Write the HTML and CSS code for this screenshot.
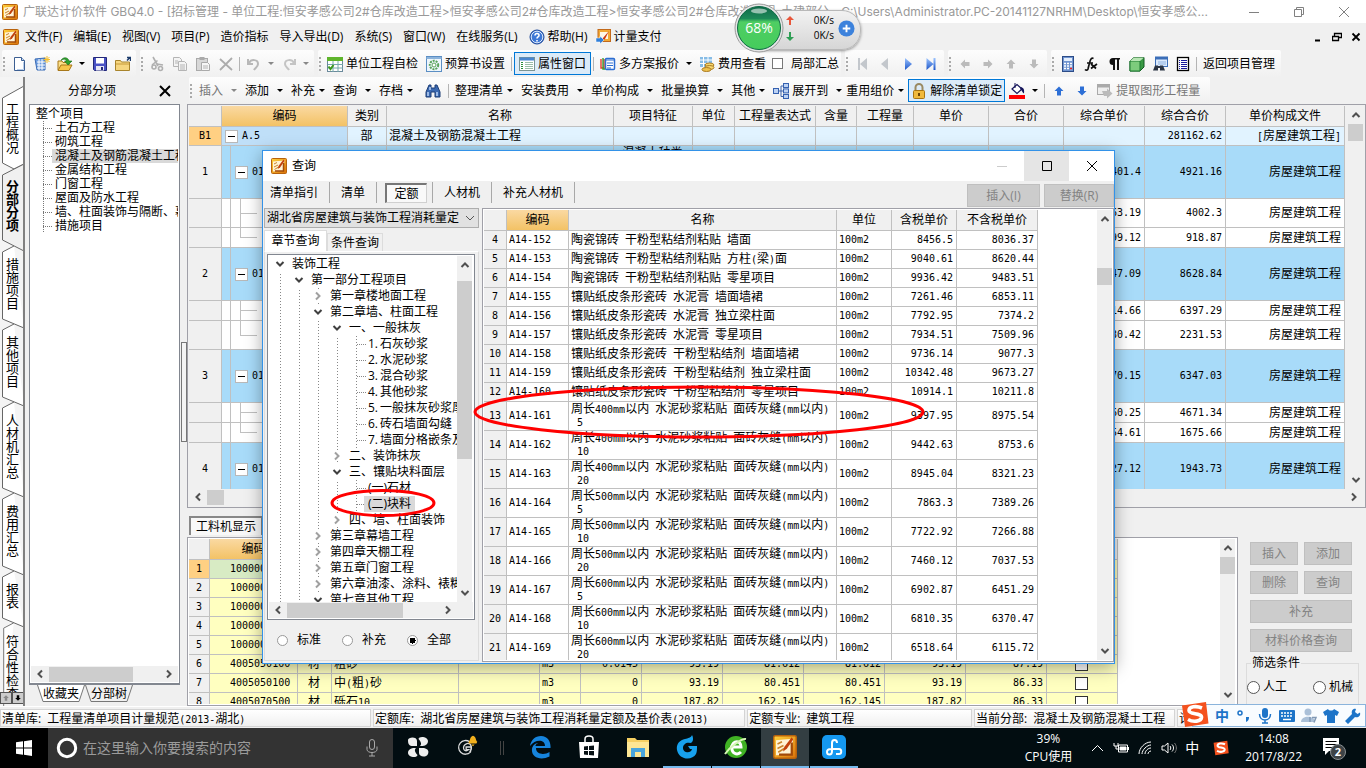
FILE: index.html
```html
<!DOCTYPE html>
<html lang="zh-CN">
<head>
<meta charset="utf-8">
<title>广联达计价软件 GBQ4.0</title>
<link rel="stylesheet" href="styles.css">
</head>
<body>
<svg class="defs" aria-hidden="true">
  <defs>
    <linearGradient id="gold" x1="0" y1="0" x2="1" y2="1"><stop offset="0" stop-color="#ffd23c"/><stop offset="1" stop-color="#d9720a"/></linearGradient>
    <linearGradient id="sky" x1="0" y1="0" x2="0" y2="1"><stop offset="0" stop-color="#9cc4ff"/><stop offset="1" stop-color="#1c55c8"/></linearGradient>
    <linearGradient id="gball" x1="0" y1="0" x2="0" y2="1"><stop offset="0" stop-color="#11694a"/><stop offset=".28" stop-color="#1d8a58"/><stop offset=".36" stop-color="#4fce63"/><stop offset="1" stop-color="#45cc5c"/></linearGradient>
  </defs>
  <symbol id="logo" viewBox="0 0 16 16"><rect x=".5" y=".5" width="15" height="15" rx="1" fill="url(#gold)" stroke="#b8620c"/><path d="M2 3.500 7 3l6.500-.5-1.500 10.500-10 .5z" fill="#fff3d4"/><path d="M3 6l3-1.500M3 9l4-2M3.500 11.500l4-2.500" stroke="#c9842c" fill="none"/><path d="M12.500 1.500 7.500 8l-.8 3 2.500-1.800L13.500 3z" fill="#c2410c"/><path d="M12.500 5v8H4" stroke="#a24a08" stroke-width="1.500" fill="none"/></symbol>
  <symbol id="new" viewBox="0 0 16 16"><path d="M3.500 1.500h7l3 3v10h-10z" fill="#fff" stroke="#3c5f92"/><path d="M10.500 1.500v3h3" fill="#c8dcf8" stroke="#3c5f92"/><path d="M12.500 6v7.500H6" stroke="#b7cdea" fill="none"/></symbol>
  <symbol id="grid" viewBox="0 0 16 16"><path d="M1 3l10-1v12H3z" fill="#6f9ee0" stroke="#3b6cb5"/><path d="M3 6h8M3 9h8M3 12h8M5 3v11M8 3v11" stroke="#fff"/><path d="M13 0v7M9.500 3.500h7M10.500 1l5 5M15.500 1l-5 5" stroke="#f3bd2b"/></symbol>
  <symbol id="open" viewBox="0 0 16 16"><path d="M1 14V5h4l1 1.500h6V9" fill="#fce08a" stroke="#a8781a"/><path d="M1 14.500 4 9h11l-3 5.500z" fill="#f6c54a" stroke="#a8781a"/><path d="M4 4.500C6 .5 11 1 12 5h3l-4 4-3.500-4h2C9 3 6.500 2.500 4 4.500z" fill="#2ea32e" stroke="#146a14" stroke-width=".6"/></symbol>
  <symbol id="save" viewBox="0 0 16 16"><path d="M1.500 1.500h13v13h-12l-1-1z" fill="#4a52c4" stroke="#23287a"/><rect x="4" y="2" width="8" height="5.500" fill="#fff"/><rect x="4" y="10" width="8" height="4.500" fill="#e8e8f4"/><rect x="9" y="11" width="2" height="3" fill="#23287a"/></symbol>
  <symbol id="folder" viewBox="0 0 16 16"><path d="M.5 14.500v-10h5l1 1.500h8v8.500z" fill="#f6d680" stroke="#a8842c"/><path d="M1 8h13" stroke="#c69a3a"/><path d="M12 4.500 15 1.500M12 1.500h3.500V5" stroke="#1c3c6c" stroke-width="1.500" fill="none"/></symbol>
  <symbol id="cut" viewBox="0 0 16 16"><g fill="none" stroke="#b0b0b0" stroke-width="1.600"><path d="M4 1l5 9M8.500 4.500 3 9"/><circle cx="5" cy="11" r="2"/><circle cx="11.500" cy="12.500" r="2"/><path d="M8 8l6 1"/></g></symbol>
  <symbol id="copy" viewBox="0 0 16 16"><path d="M1.500 1.500h6l2 2v7h-8z" fill="#f4f4f4" stroke="#b4b4b4"/><path d="M6.500 5.500h6l2 2v7h-8z" fill="#f4f4f4" stroke="#b4b4b4"/><path d="M8 9h5M8 11h5M8 13h5M3 5h3M3 7h3" stroke="#b4b4b4"/></symbol>
  <symbol id="paste" viewBox="0 0 16 16"><rect x="1.500" y="2.500" width="11" height="12" fill="#d8d8d8" stroke="#aaa"/><rect x="4.500" y="1" width="5" height="3" fill="#aaa"/><path d="M6.500 6.500h6l2 2v6h-8z" fill="#f6f6f6" stroke="#aaa"/><path d="M8 10h5M8 12h5" stroke="#b4b4b4"/></symbol>
  <symbol id="del" viewBox="0 0 16 16"><path d="M2 3l12 11M14 2 2 14" stroke="#acacac" stroke-width="1.800"/></symbol>
  <symbol id="undo" viewBox="0 0 16 16"><path d="M2 3v5h5M3 7c2-4 9-4 9 1 0 3-3 4-4 6" fill="none" stroke="#b8b8b8" stroke-width="2"/></symbol>
  <symbol id="redo" viewBox="0 0 16 16"><path d="M14 3v5H9M13 7C11 3 4 3 4 8c0 3 3 4 4 6" fill="none" stroke="#c4c4c4" stroke-width="2"/></symbol>
  <symbol id="tbl" viewBox="0 0 16 16"><rect x=".5" y="1.500" width="15" height="14" fill="#fff" stroke="#6b8a9c"/><rect y="1" width="16" height="4" fill="#5fb52c"/><path d="M1 8.500h15M1 12h15M6 5v11M11 5v11" stroke="#7aa"/><path d="M1.500 10.500l2 2.500 3-4" stroke="#3c9a1c" stroke-width="2" fill="none"/></symbol>
  <symbol id="gear" viewBox="0 0 16 16"><rect x=".5" y=".5" width="15" height="15" fill="#eef6fc" stroke="#5b8ec4"/><path d="M.5 2h15" stroke="#8db4dc" stroke-width="2"/><circle cx="8" cy="9" r="4.200" fill="none" stroke="#5aa45a" stroke-width="2" stroke-dasharray="2 1"/><circle cx="8" cy="9" r="2" fill="#fff" stroke="#5aa45a"/></symbol>
  <symbol id="prop" viewBox="0 0 16 16"><rect x=".5" y="1.500" width="15" height="13" fill="#fff" stroke="#7a9494"/><path d="M1 3h14" stroke="#4a86cf" stroke-width="3"/><path d="M6 6.500h8M6 8.500h8M6 10.500h8M6 12.500h8" stroke="#9abca8"/><path d="M2 6.500h2M2 8.500h2M2 10.500h2M2 12.500h2" stroke="#2b8d3c"/></symbol>
  <symbol id="multi" viewBox="0 0 16 16"><path d="M1 3v9h3V3" fill="#fff" stroke="#e03c2c" stroke-width="1.400"/><path d="M3 2v11h2" fill="none" stroke="#34a034" stroke-width="1.400"/><rect x="5.500" y="2.500" width="9" height="11" rx="1" fill="#fff" stroke="#2c6ed2" stroke-width="1.500"/><path d="M5 4h10M7 7h6M7 9.500h6M7 12h4" stroke="#2c6ed2"/></symbol>
  <symbol id="fee" viewBox="0 0 16 16"><rect x="1" y="1" width="12" height="10" fill="#86bce6"/><path d="M1 4h12M1 7.500h12M4.500 1v10M9 1v10" stroke="#fff"/><ellipse cx="10.500" cy="9" rx="4.500" ry="2" fill="#f6d66e" stroke="#ab7b22"/><ellipse cx="10.500" cy="11.500" rx="4.500" ry="2" fill="#f6d66e" stroke="#ab7b22"/><ellipse cx="7.500" cy="13.500" rx="4.500" ry="2" fill="#eec24e" stroke="#ab7b22"/></symbol>
  <symbol id="first" viewBox="0 0 16 16"><path d="M4 2h2v12H4zM13 2v12L6 8z" fill="#c3c7cc"/></symbol>
  <symbol id="prev" viewBox="0 0 16 16"><path d="M11 2v12L4 8z" fill="#c3c7cc"/></symbol>
  <symbol id="next" viewBox="0 0 16 16"><path d="M5 2v12l7-6z" fill="url(#sky)"/></symbol>
  <symbol id="last" viewBox="0 0 16 16"><path d="M10.500 2h2v12h-2zM3.500 2v12l7-6z" fill="url(#sky)"/></symbol>
  <symbol id="arr" viewBox="0 0 16 16"><path d="M8 3.500 12.500 8H10v4.500H6V8H3.500z"/></symbol>
  <symbol id="calc" viewBox="0 0 16 16"><rect x="2.500" y=".5" width="11" height="15" fill="#6f94d0" stroke="#2c4c88"/><rect x="4" y="2" width="8" height="3" fill="#e4eefc"/><path d="M4 7.500h8M4 10h8M4 12.500h8" stroke="#fff" stroke-width="1.500" stroke-dasharray="2 1"/><path d="M10 12.500h2" stroke="#e22" stroke-width="1.500"/></symbol>
  <symbol id="fx" viewBox="0 0 16 16"><path d="M10.500 2.500C7.500 1 7 5 5 13c-.5 1.500-2 1.500-3 .5M4 7h6M8 8l5 4.500M14 8l-6 4.500" fill="none" stroke="#111" stroke-width="1.700"/></symbol>
  <symbol id="para" viewBox="0 0 16 16"><path d="M14 2H7a3.500 3.500 0 0 0 0 7v5h2V3.500h2V14h2V3.500h1z" fill="#111"/></symbol>
  <symbol id="cube" viewBox="0 0 16 16"><path d="M1 5l4-3.500h10V11l-4 4H1z" fill="#3a9a45" stroke="#125a22"/><path d="M1 5h10v10H1z" fill="#7ccc7c" stroke="#1c7a30"/><path d="M1 5l4-3.500h10L11 5z" fill="#b8e6b4"/></symbol>
  <symbol id="find" viewBox="0 0 16 16"><rect x="3.500" y="1.500" width="12" height="9" fill="#dbeafd" stroke="#3b6eb8"/><path d="M3 2h13" stroke="#3b6eb8" stroke-width="3"/><path d="M6 6h8M6 8h8" stroke="#8fb2e0"/><path d="M1 14.500l2-5h3v5zM8 14.500v-5h3l2 5z" fill="#2a3444"/><path d="M5 11h4" stroke="#2a3444" stroke-width="2"/></symbol>
  <symbol id="lst" viewBox="0 0 16 16"><rect x="2.500" y="1.500" width="11" height="13" fill="#fff" stroke="#000" stroke-width="1.300"/><path d="M4 4.500h1M6 4.500h6M4 6.500h1M6 6.500h6M4 8.500h1M6 8.500h6M4 10.500h1M6 10.500h6M4 12.500h1M6 12.500h6" stroke="#1a1a9a"/></symbol>
  <symbol id="bino" viewBox="0 0 16 16"><path d="M1 14V9l3-7h2v3h4V2h2l3 7v5h-5V9H6v5z" fill="#3a68b0" stroke="#1c3c74"/><path d="M3 9v4M12 9v4M5 4v3" stroke="#bcd4f6" stroke-width="1.500"/></symbol>
  <symbol id="exp" viewBox="0 0 16 16"><path d="M6 8h4M8 8V3h2M8 8v5.500h2" fill="none" stroke="#3a62ac"/><g fill="#bcd2f4" stroke="#3561b0"><rect x=".5" y="5.500" width="5" height="5"/><rect x="10.500" y=".5" width="5" height="4"/><rect x="10.500" y="5.900" width="5" height="4"/><rect x="10.500" y="11.500" width="5" height="4"/></g></symbol>
  <symbol id="lock" viewBox="0 0 16 16"><path d="M4.500 8V4.500a3.500 3.500 0 0 1 7 0V8" fill="none" stroke="#9a8a62" stroke-width="2"/><rect x="2.500" y="7.500" width="11" height="8" rx="1" fill="#f0b93c" stroke="#a87412"/><path d="M8 10v3" stroke="#704600" stroke-width="2"/></symbol>
  <symbol id="fill" viewBox="0 0 16 16"><path d="M3 6l5-4.500L13 6 8 10.500z" fill="#fff" stroke="#15155a" stroke-width="1.200"/><path d="M6 0v5" stroke="#15155a"/><path d="M12 4c3 1 3.500 3 3 6.500C13.500 10 13 7 11 6z" fill="#15155a"/><path d="M0 12h16v4H0z" fill="#f00"/></symbol>
  <symbol id="pick" viewBox="0 0 16 16"><rect x=".5" y="1.500" width="12" height="10" fill="#eee" stroke="#aaa"/><path d="M0 3h13" stroke="#aaa" stroke-width="3"/><path d="M5 8h5V5.500l5.500 5-5.500 5V13H7z" fill="#bbb"/></symbol>
  <symbol id="help" viewBox="0 0 16 16"><circle cx="8" cy="8" r="7" fill="#3e78d6" stroke="#1b4596"/><circle cx="8" cy="8" r="5.800" fill="none" stroke="#dbe8fb"/><path d="M6 6.500C6 3.500 10.500 4 10 6.800 9.500 8 8 8 8 9.500M8 11v1.500" stroke="#fff" stroke-width="1.600" fill="none"/></symbol>
  <symbol id="pay" viewBox="0 0 16 16"><rect x="3" y=".5" width="12.500" height="12" fill="#f2a934" stroke="#c2691a"/><path d="M5 3h8v7H5z" fill="#fff7e4"/><path d="M14 2 8 9l-1 3 3-2z" fill="#cf3a12"/><path d="M1 9h4V7l4 4-4 4v-2H1z" fill="#2f7fda" stroke="#fff" stroke-width=".5"/></symbol>
  <symbol id="cv" viewBox="0 0 10 10"><path d="M1.500 3 5 6.500 8.500 3" fill="none" stroke="currentColor" stroke-width="2"/></symbol>
  <symbol id="sogou" viewBox="0 0 28 26"><path d="M1 4 25 .5 27.500 22 4 25.500z" fill="#f4511e"/><path d="M21 6.500C15 4 8 5 8 9c0 4.500 13 2 12.500 7-.5 4-8 5-13.500 2" fill="none" stroke="#fff" stroke-width="3.600"/></symbol>
</svg>

<header>
  <div class="titlebar">
    <svg class="i"><use href="#logo"/></svg>
    <span class="ttl">广联达计价软件 GBQ4.0 - [招标管理 - 单位工程:恒安孝感公司2#仓库改造工程&gt;恒安孝感公司2#仓库改造工程&gt;恒安孝感公司2#仓库改造工程-土建部分 - C:\Users\Administrator.PC-20141127NRHM\Desktop\恒安孝感公...</span>
    <div class="winctl">
      <button aria-label="最小化"><svg viewBox="0 0 12 12"><path d="M1 6.500h10"/></svg></button>
      <button aria-label="还原"><svg viewBox="0 0 12 12"><path d="M1.500 3.500h7v7h-7zM3.500 3.500v-2h7v7h-2"/></svg></button>
      <button aria-label="关闭"><svg viewBox="0 0 12 12"><path d="M1 1l10 10M11 1 1 11"/></svg></button>
    </div>
  </div>
  <nav class="menubar">
    <svg class="i"><use href="#logo"/></svg>
    <button>文件(F)</button><button>编辑(E)</button><button>视图(V)</button><button>项目(P)</button><button>造价指标</button><button>导入导出(D)</button><button>系统(S)</button><button>窗口(W)</button><button>在线服务(L)</button><button><svg class="i"><use href="#help"/></svg>帮助(H)</button><button class="near"><svg class="i"><use href="#pay"/></svg>计量支付</button>
    <div class="mdi">
      <button aria-label="最小化子窗口"><svg viewBox="0 0 10 10"><path d="M2 8.500h5" stroke-width="2"/></svg></button>
      <button aria-label="还原子窗口"><svg viewBox="0 0 10 10"><path d="M.5 4.500h6v4h-6zM2.500 4V1.500h7v4H7M2 1.500h8M0 4.500h7" stroke-width="1.300"/></svg></button>
      <button aria-label="关闭子窗口"><svg viewBox="0 0 10 10"><path d="M1.500 1.500l7 7M8.500 1.500l-7 7" stroke-width="1.800"/></svg></button>
    </div>
  </nav>
  <div class="bar">
    <div class="grp"><i class="grip"></i>
      <button class="ib" aria-label="新建"><svg class="i"><use href="#new"/></svg></button><button class="ib" aria-label="新建表"><svg class="i"><use href="#grid"/></svg></button><button class="ib" aria-label="打开"><svg class="i"><use href="#open"/></svg></button><i class="car"></i><button class="ib" aria-label="保存"><svg class="i"><use href="#save"/></svg></button><button class="ib" aria-label="文件夹"><svg class="i"><use href="#folder"/></svg></button></div>
    <div class="grp"><i class="grip"></i>
      <button class="ib" aria-label="剪切"><svg class="i"><use href="#cut"/></svg></button><button class="ib" aria-label="复制"><svg class="i"><use href="#copy"/></svg></button><button class="ib" aria-label="粘贴"><svg class="i"><use href="#paste"/></svg></button><button class="ib" aria-label="删除行"><svg class="i"><use href="#del"/></svg></button><i class="sep"></i><button class="ib" aria-label="撤销"><svg class="i"><use href="#undo"/></svg></button><i class="car off"></i><button class="ib" aria-label="重做"><svg class="i"><use href="#redo"/></svg></button><i class="car off"></i></div>
    <div class="grp"><i class="grip"></i>
      <button class="tb"><svg class="i"><use href="#tbl"/></svg>单位工程自检</button><button class="tb"><svg class="i"><use href="#gear"/></svg>预算书设置</button><i class="sep"></i><button class="tb on"><svg class="i"><use href="#prop"/></svg>属性窗口</button><i class="sep"></i><button class="tb"><svg class="i"><use href="#multi"/></svg>多方案报价</button><i class="car"></i><button class="tb"><svg class="i"><use href="#fee"/></svg>费用查看</button><label class="chk"><input type="checkbox">局部汇总</label></div>
    <div class="grp"><i class="grip"></i>
      <button class="ib" aria-label="首条"><svg class="i"><use href="#first"/></svg></button><button class="ib" aria-label="上一条"><svg class="i"><use href="#prev"/></svg></button><button class="ib" aria-label="下一条"><svg class="i"><use href="#next"/></svg></button><button class="ib" aria-label="末条"><svg class="i"><use href="#last"/></svg></button></div>
    <div class="grp"><i class="grip"></i>
      <button class="ib gray" aria-label="左移"><svg class="i l"><use href="#arr"/></svg></button><button class="ib gray" aria-label="右移"><svg class="i r"><use href="#arr"/></svg></button><button class="ib gray" aria-label="上移"><svg class="i"><use href="#arr"/></svg></button><button class="ib gray" aria-label="下移"><svg class="i d"><use href="#arr"/></svg></button></div>
    <div class="grp"><i class="grip"></i>
      <button class="ib" aria-label="计算器"><svg class="i"><use href="#calc"/></svg></button><button class="ib" aria-label="函数"><svg class="i"><use href="#fx"/></svg></button><button class="ib" aria-label="段落"><svg class="i"><use href="#para"/></svg></button><button class="ib" aria-label="图形"><svg class="i"><use href="#cube"/></svg></button><button class="ib" aria-label="查找表"><svg class="i"><use href="#find"/></svg></button><button class="ib" aria-label="列表"><svg class="i"><use href="#lst"/></svg></button><i class="sep"></i><button class="tb">返回项目管理</button></div>
  </div>
</header>

<main>
  <nav class="vtabs">
    <button><svg viewBox="0 0 24 78"><path d="M24 -3 2.500 9V74L14 80 24 75"/></svg>工程概况</button>
    <button class="cur"><svg viewBox="0 0 24 78"><path d="M24 -3 2.500 8V73L24 84"/></svg>分部分项</button>
    <button><svg viewBox="0 0 24 78"><path d="M14 1 2.500 7V74L24 83"/></svg>措施项目</button>
    <button><svg viewBox="0 0 24 78"><path d="M14 1 2.500 7V74L24 83"/></svg>其他项目</button>
    <button><svg viewBox="0 0 24 91"><path d="M14 1 2.500 7V87L24 96"/></svg>人材机汇总</button>
    <button><svg viewBox="0 0 24 78"><path d="M14 1 2.500 7V74L24 83"/></svg>费用汇总</button>
    <button><svg viewBox="0 0 24 52"><path d="M14 1 2.500 7V48L24 57"/></svg>报表</button>
    <button><svg viewBox="0 0 24 104"><path d="M14 1 2.500 7V104"/></svg>符合性检查</button>
    <div class="spin"><button aria-label="上滚" disabled><svg class="i"><use href="#arr"/></svg></button><button aria-label="下滚"><svg class="i d"><use href="#arr"/></svg></button></div>
  </nav>

  <aside class="side">
    <div class="sidehead"><span>分部分项</span><button aria-label="关闭面板"><svg viewBox="0 0 12 12"><path d="M1 1l10 10M11 1 1 11"/></svg></button></div>
    <div class="sidebox">
      <div class="ptree"><div>整个项目</div>
        <ul><li>土石方工程</li><li>砌筑工程</li><li class="sel">混凝土及钢筋混凝土工程</li><li>金属结构工程</li><li>门窗工程</li><li>屋面及防水工程</li><li>墙、柱面装饰与隔断、幕墙</li><li>措施项目</li></ul>
      </div>
      <div class="hs"><svg class="a l"><use href="#cv"/></svg><i class="thumb"></i><svg class="a r"><use href="#cv"/></svg></div>
    </div>
    <div class="sidetabs"><button><svg viewBox="0 0 48 17"><path d="M.5 0 6 16.500H42L47.500 0"/></svg><span>收藏夹</span></button><button class="cur"><svg viewBox="0 0 48 17"><path d="M.5 0 6 16.500H42L47.500 0"/></svg><span>分部树</span></button></div>
  </aside>
  <div class="split"><i></i></div>

  <section class="work">
    <div class="bar bar2">
      <div class="grp"><i class="grip"></i>
        <button class="tx off">插入</button><i class="car wide off"></i><button class="tx">添加</button><i class="car wide"></i><button class="tx">补充</button><i class="car mid"></i><button class="tx">查询</button><i class="car wide"></i><button class="tx">存档</button><i class="car mid"></i><button class="ib" aria-label="查找"><svg class="i"><use href="#bino"/></svg></button><i class="sep"></i><button class="tx">整理清单</button><i class="car mid"></i><button class="tx">安装费用</button><i class="car wide"></i><button class="tx">单价构成</button><i class="car wide"></i><button class="tx">批量换算</button><i class="car wide"></i><button class="tx">其他</button><i class="car"></i><button class="tb"><svg class="i"><use href="#exp"/></svg>展开到</button><i class="car"></i><button class="tx">重用组价</button><i class="car"></i><button class="tb on"><svg class="i"><use href="#lock"/></svg>解除清单锁定</button><button class="ib" aria-label="填充颜色"><svg class="i"><use href="#fill"/></svg></button><i class="car"></i><i class="sep"></i><button class="ib blue" aria-label="清单上移"><svg class="i"><use href="#arr"/></svg></button><button class="ib blue" aria-label="清单下移"><svg class="i d"><use href="#arr"/></svg></button><button class="tb off"><svg class="i"><use href="#pick"/></svg>提取图形工程量</button></div>
    </div>

    <div class="frame top">
      <div class="clip">
        <table class="g main">
          <colgroup><col style="width:33px"><col style="width:126px"><col style="width:39px"><col><col style="width:79px"><col style="width:42px"><col style="width:81px"><col style="width:41px"><col style="width:57px"><col style="width:75px"><col style="width:75px"><col style="width:81px"><col style="width:81px"><col style="width:119px"></colgroup>
          <thead><tr><th></th><th class="hot">编码</th><th>类别</th><th>名称</th><th>项目特征</th><th>单位</th><th>工程量表达式</th><th>含量</th><th>工程量</th><th>单价</th><th>合价</th><th>综合单价</th><th>综合合价</th><th>单价构成文件</th></tr></thead>
          <tbody>
            <tr class="h19 part"><th class="n">B1</th><td class="code n k1"><i class="mb"></i>A.5</td><td class="c">部</td><td>混凝土及钢筋混凝土工程</td><td></td><td></td><td></td><td></td><td></td><td></td><td></td><td></td><td class="num">281162.62</td><td class="rt"><span class="n">[</span>房屋建筑工程<span class="n">]</span></td></tr>
            <tr class="h53 item"><th class="n">1</th><td class="code n k2"><i class="mb"></i>01</td><td></td><td></td><td class="feat">混凝土种类</td><td></td><td></td><td></td><td></td><td></td><td></td><td class="num">401.4</td><td class="num">4921.16</td><td class="rt">房屋建筑工程</td></tr>
            <tr class="h29"><th></th><td class="k3"></td><td></td><td></td><td></td><td></td><td></td><td></td><td></td><td></td><td></td><td class="num">63.19</td><td class="num">4002.3</td><td class="rt">房屋建筑工程</td></tr>
            <tr class="h20"><th></th><td class="k4"></td><td></td><td></td><td></td><td></td><td></td><td></td><td></td><td></td><td></td><td class="num">99.12</td><td class="num">918.87</td><td class="rt">房屋建筑工程</td></tr>
            <tr class="h53 item"><th class="n">2</th><td class="code n k2"><i class="mb"></i>01</td><td></td><td></td><td></td><td></td><td></td><td></td><td></td><td></td><td></td><td class="num">47.09</td><td class="num">8628.84</td><td class="rt">房屋建筑工程</td></tr>
            <tr class="h20"><th></th><td class="k3"></td><td></td><td></td><td></td><td></td><td></td><td></td><td></td><td></td><td></td><td class="num">14.66</td><td class="num">6397.29</td><td class="rt">房屋建筑工程</td></tr>
            <tr class="h29"><th></th><td class="k4"></td><td></td><td></td><td></td><td></td><td></td><td></td><td></td><td></td><td></td><td class="num">30.42</td><td class="num">2231.53</td><td class="rt">房屋建筑工程</td></tr>
            <tr class="h53 item"><th class="n">3</th><td class="code n k2"><i class="mb"></i>01</td><td></td><td></td><td></td><td></td><td></td><td></td><td></td><td></td><td></td><td class="num">70.15</td><td class="num">6347.03</td><td class="rt">房屋建筑工程</td></tr>
            <tr class="h20"><th></th><td class="k3"></td><td></td><td></td><td></td><td></td><td></td><td></td><td></td><td></td><td></td><td class="num">60.25</td><td class="num">4671.34</td><td class="rt">房屋建筑工程</td></tr>
            <tr class="h20"><th></th><td class="k4"></td><td></td><td></td><td></td><td></td><td></td><td></td><td></td><td></td><td></td><td class="num">54.61</td><td class="num">1675.66</td><td class="rt">房屋建筑工程</td></tr>
            <tr class="h53 item"><th class="n">4</th><td class="code n k2"><i class="mb"></i>01</td><td></td><td></td><td></td><td></td><td></td><td></td><td></td><td></td><td></td><td class="num">27.12</td><td class="num">1943.73</td><td class="rt">房屋建筑工程</td></tr>
          </tbody>
        </table>
      </div>
      <div class="vs"><svg class="a u"><use href="#cv"/></svg><i class="thumb"></i><svg class="a end"><use href="#cv"/></svg></div>
      <div class="hs"><svg class="a l"><use href="#cv"/></svg><i class="thumb short"></i><svg class="a r"><use href="#cv"/></svg></div>
    </div>

    <div class="midtabs"><button>工料机显示</button></div>

    <div class="bottom">
      <div class="frame low">
        <div class="clip">
          <table class="g yel">
            <colgroup><col style="width:21px"><col style="width:88px"><col style="width:34px"><col style="width:127px"><col style="width:81px"><col style="width:41px"><col style="width:61px"><col style="width:81px"><col style="width:81px"><col style="width:81px"><col style="width:81px"><col style="width:81px"><col style="width:71px"></colgroup>
            <thead><tr><th></th><th class="hot">编码</th><th></th><th></th><th></th><th></th><th></th><th></th><th></th><th></th><th></th><th></th><th></th></tr></thead>
            <tbody>
              <tr class="cur"><th class="n">1</th><td class="n id">100000</td><td></td><td></td><td></td><td></td><td></td><td></td><td></td><td></td><td></td><td></td><td></td></tr>
              <tr><th class="n">2</th><td class="n id">100000</td><td></td><td></td><td></td><td></td><td></td><td></td><td></td><td></td><td></td><td></td><td></td></tr>
              <tr><th class="n">3</th><td class="n id">100000</td><td></td><td></td><td></td><td></td><td></td><td></td><td></td><td></td><td></td><td></td><td></td></tr>
              <tr><th class="n">4</th><td class="n id">100000</td><td></td><td></td><td></td><td></td><td></td><td></td><td></td><td></td><td></td><td></td><td></td></tr>
              <tr><th class="n">5</th><td class="n id">100000</td><td></td><td></td><td></td><td></td><td></td><td></td><td></td><td></td><td></td><td></td><td></td></tr>
              <tr><th class="n">6</th><td class="n id">4005050100</td><td class="c">材</td><td>粗砂</td><td></td><td class="n">m3</td><td class="num">0.0145</td><td class="num">93.19</td><td class="num">81.612</td><td class="num">81.612</td><td class="num">93.19</td><td class="num">87.19</td><td class="c"><input type="checkbox" aria-label="第6行"></td></tr>
              <tr><th class="n">7</th><td class="n id">4005050100</td><td class="c">材</td><td>中<span class="n">(</span>粗<span class="n">)</span>砂</td><td></td><td class="n">m3</td><td class="num">0</td><td class="num">93.19</td><td class="num">80.451</td><td class="num">80.451</td><td class="num">93.19</td><td class="num">86.33</td><td class="c"><input type="checkbox" aria-label="第7行"></td></tr>
              <tr><th class="n">8</th><td class="n id">4005070500</td><td class="c">材</td><td>砾石<span class="n">10</span></td><td></td><td class="n">m3</td><td class="num">0</td><td class="num">187.82</td><td class="num">162.145</td><td class="num">162.145</td><td class="num">187.82</td><td class="num">86.33</td><td class="c"><input type="checkbox" aria-label="第8行"></td></tr>
            </tbody>
          </table>
        </div>
        <div class="vs"><svg class="a u"><use href="#cv"/></svg><i class="thumb"></i><svg class="a end"><use href="#cv"/></svg></div>
      </div>
      <div class="acts">
        <div class="btns"><button disabled>插入</button><button disabled>添加</button><button disabled>删除</button><button disabled>查询</button><button disabled class="w">补充</button><button disabled class="w">材料价格查询</button></div>
        <fieldset><legend>筛选条件</legend><label><input type="radio" name="flt">人工</label><label><input type="radio" name="flt">机械</label></fieldset>
      </div>
    </div>
  </section>
</main>

<footer class="status"><span>清单库:&ensp;工程量清单项目计量规范<b>(2013-</b>湖北<b>)</b></span><span>定额库:&ensp;湖北省房屋建筑与装饰工程消耗量定额及基价表<b>(2013)</b></span><span>定额专业:&ensp;建筑工程</span><span>当前分部:&ensp;混凝土及钢筋混凝土工程</span><span>计</span></footer>

<div class="taskbar">
  <button class="start" aria-label="开始"><svg viewBox="0 0 16 16"><path d="M0 2.300 7 1.300V7.500H0zM8 1.200 16 0v7.500H8zM0 8.500h7v6.200l-7-1zM8 8.500h8V16l-8-1.200z" fill="#fff"/></svg></button>
  <div class="search"><svg class="ring" viewBox="0 0 22 22"><circle cx="11" cy="11" r="8.700" fill="none" stroke="#fff" stroke-width="3"/></svg><input type="text" aria-label="搜索" placeholder="在这里输入你要搜索的内容"><svg class="mic" viewBox="0 0 12 18"><rect x="3.500" y=".5" width="5" height="10" rx="2.500"/><path d="M1 7.500v3c0 4 10 4 10 0v-3M6 13.500V17M3 17h6"/></svg></div>
  <div class="apps">
    <button aria-label="应用1"><svg viewBox="0 0 24 24"><g fill="#eee"><path d="M2 5c0-3 9-4 9 1v5H7C3 11 2 9 2 5z"/><path d="M12.500 4c0-3 9-3 9.500 2 0 4-4 5.500-8 5 2-2 1-4-1.500-7z"/><path d="M11.500 20c0 3-9 3-9.500-2 0-4 4-5.500 8-5-2 2-1 4 1.500 7z"/><path d="M13 13h5c4 1 5 3 4 6-2 4-9 3-9-1z"/></g></svg></button>
    <button aria-label="应用2"><svg viewBox="0 0 28 28"><path d="M17 8a8 8 0 1 0 1 12l1-6h-6v3h3c-6 5-9-5-2-7 5-1 7 6 3 10" fill="none" stroke="#ddd" stroke-width="1.500"/><path d="M16 8c2-1 1-6 5-7 4 1 3 6 5 7l-1 2h-9zM19 11h4l-2 2z" fill="#f2b01e"/></svg></button>
    <i class="bars"></i>
    <button aria-label="Edge"><svg viewBox="0 0 24 24"><path d="M2 11C3 5 7 1 13 1c7 0 10 6 9.500 12H8c0 7 9 7 13.500 4v4.500C12 26 3 22 4 14c.5-4 4-6 6-6-2 1-2.500 2-2.500 3H17c0-7-10-7-15 0z" fill="#1684dd"/></svg></button>
    <button aria-label="商店"><svg viewBox="0 0 24 24"><path d="M2 7h20l-1 16H3z" fill="#fff"/><path d="M8 7V4c0-4 8-4 8 0v3" fill="none" stroke="#fff" stroke-width="1.500"/><path d="M7 11.500l4-.5v4H7zM12 11l5-.6V15h-5zM7 16h4v4l-4-.5zM12 16h5v4.600L12 20z" fill="#061014"/></svg></button>
    <button aria-label="文件资源管理器"><svg viewBox="0 0 24 24"><path d="M1 3h8l2 2h12v17H1z" fill="#f5cf62"/><path d="M1 7h22v15H1z" fill="#fde694"/><path d="M5 22v-9h14v9h-4v-5H9v5z" fill="#49a5dc"/></svg></button>
    <button class="run" aria-label="应用3"><svg viewBox="0 0 24 24"><path d="M17 0c-1 3-4 3-7 4C4 5 1 10 2 15c2 10 15 11 19 4 1-2 1-5 1-8h-9l2 3h2c-1 5-9 4-9-1 0-4 4-6 7-5 3 0 4-5 2-8z" fill="#17a1ee"/></svg></button>
    <button class="run" aria-label="浏览器"><svg viewBox="0 0 24 24"><circle cx="12" cy="12" r="11" fill="#40b224"/><path d="M17 17c-4 4-10 1-9-5 1-7 9-7 9 0H6" fill="none" stroke="#fff" stroke-width="3"/><path d="M1 19C5 13 17 3 22 4" stroke="#d5f6b4" stroke-width="2" fill="none"/></svg></button>
    <button class="run hot" aria-label="广联达"><svg><use href="#logo"/></svg></button>
    <button class="run" aria-label="应用4"><svg viewBox="0 0 24 24"><rect width="24" height="24" rx="5" fill="#1598f0"/><path d="M15 8c0-4-5-4-5 0v8c0 5-5 4-5 1 0-2 2-3 4-3h8c3 0 3 5 0 5h-3" fill="none" stroke="#fff" stroke-width="2"/></svg></button>
  </div>
  <div class="tray">
    <div class="cpu">39%<br>CPU使用</div>
    <svg class="ti" viewBox="0 0 16 16"><path d="M3 11l5.500-5.500L14 11"/></svg>
    <svg class="ti" viewBox="0 0 16 16"><path d="M5.500 5h9v7h-9zM15.500 7v3M1 3v3h4V3M3 6v3h2"/><path d="M7 7h6v3H7z" fill="#fff"/></svg>
    <svg class="ti" viewBox="0 0 16 16"><path d="M2 14C2 8 8 2 14 2M5 14c0-4 5-9 9-9M8 14c0-3 3-6 6-6M11 14c0-1 1-3 3-3"/></svg>
    <svg class="ti" viewBox="0 0 16 16"><path d="M1 6h2.500L7 3v10l-3.500-3H1zM9 6c1 1 1 3 0 4M11 4.500c2 2 2 5 0 7"/><path d="M13.500 3c2.500 3 2.500 7 0 10" stroke="#777"/></svg>
    <span class="zh">中</span>
    <svg class="sg"><use href="#sogou"/></svg>
    <div class="clock">14:08<br>2017/8/22</div>
    <div class="note"><svg viewBox="0 0 26 24"><path d="M2 2h16v13H8l-4 4v-4H2z" fill="#fff"/><path d="M4.500 5.500h11M4.500 8.500h11M4.500 11.500h7" stroke="#000"/><circle cx="17" cy="16" r="7.500" fill="#3e4346" stroke="#8a8f92"/></svg><b>2</b></div>
  </div>
</div>

<section class="dlg" role="dialog" aria-label="查询">
  <div class="dhead"><svg class="i"><use href="#logo"/></svg><span>查询</span>
    <div class="winctl"><button class="dim" aria-label="最小化对话框"><svg viewBox="0 0 12 12"><path d="M1 6.500h10"/></svg></button><button class="hov" aria-label="最大化对话框"><svg viewBox="0 0 12 12"><path d="M1.500 1.500h9v9h-9z"/></svg></button><button aria-label="关闭对话框"><svg viewBox="0 0 12 12"><path d="M1 1l10 10M11 1 1 11"/></svg></button></div>
  </div>
  <div class="dtabs"><button>清单指引</button><button>清单</button><button class="cur"><span>定额</span></button><button>人材机</button><button>补充人材机</button>
    <div class="dact"><button disabled>插入(I)</button><button disabled>替换(R)</button></div>
  </div>
  <div class="dbody">
    <div class="dleft">
      <div class="combo"><select aria-label="定额库"><option>湖北省房屋建筑与装饰工程消耗量定</option></select><svg viewBox="0 0 10 10"><path d="M1 3l4 4 4-4"/></svg></div>
      <div class="qtabs"><button class="cur">章节查询</button><button>条件查询</button></div>
      <div class="qpage">
        <div class="tbox">
          <div class="tclip">
            <ul class="tree">
              <li><div class="r o"><svg><use href="#cv"/></svg>装饰工程</div>
              <ul>
                <li><div class="r o"><svg><use href="#cv"/></svg>第一部分工程项目</div>
                <ul>
                  <li><div class="r s"><svg><use href="#cv"/></svg>第一章楼地面工程</div></li>
                  <li><div class="r o"><svg><use href="#cv"/></svg>第二章墙、柱面工程</div>
                  <ul>
                    <li><div class="r o"><svg><use href="#cv"/></svg>一、一般抹灰</div>
                      <ul><li><div class="r f"><b>1.</b>石灰砂浆</div></li><li><div class="r f"><b>2.</b>水泥砂浆</div></li><li><div class="r f"><b>3.</b>混合砂浆</div></li><li><div class="r f"><b>4.</b>其他砂浆</div></li><li><div class="r f"><b>5.</b>一般抹灰砂浆厚度</div></li><li><div class="r f"><b>6.</b>砖石墙面勾缝</div></li><li><div class="r f"><b>7.</b>墙面分格嵌条及</div></li></ul></li>
                    <li><div class="r s"><svg><use href="#cv"/></svg>二、装饰抹灰</div></li>
                    <li><div class="r o"><svg><use href="#cv"/></svg>三、镶贴块料面层</div>
                      <ul><li><div class="r f"><span>(一)石材</span></div></li><li><div class="r f"><span class="sel">(二)块料</span></div></li></ul></li>
                    <li><div class="r s"><svg><use href="#cv"/></svg>四、墙、柱面装饰</div></li>
                  </ul></li>
                  <li><div class="r s"><svg><use href="#cv"/></svg>第三章幕墙工程</div></li>
                  <li><div class="r s"><svg><use href="#cv"/></svg>第四章天棚工程</div></li>
                  <li><div class="r s"><svg><use href="#cv"/></svg>第五章门窗工程</div></li>
                  <li><div class="r s"><svg><use href="#cv"/></svg>第六章油漆、涂料、裱糊</div></li>
                  <li><div class="r o"><svg><use href="#cv"/></svg>第七章其他工程</div></li>
                </ul></li>
              </ul></li>
            </ul>
          </div>
          <div class="vs"><svg class="a u"><use href="#cv"/></svg><i class="thumb tall"></i><svg class="a end"><use href="#cv"/></svg></div>
          <div class="hs"><svg class="a l"><use href="#cv"/></svg><i class="thumb"></i><svg class="a r"><use href="#cv"/></svg></div>
        </div>
        <div class="radios"><label><input type="radio" name="src">标准</label><label><input type="radio" name="src">补充</label><label><input type="radio" name="src" checked>全部</label></div>
      </div>
    </div>
    <div class="frame dgrid">
      <div class="clip">
        <table class="g white">
          <colgroup><col style="width:23px"><col style="width:62px"><col style="width:268px"><col style="width:55px"><col style="width:65px"><col style="width:81px"></colgroup>
          <thead><tr><th></th><th class="hot">编码</th><th>名称</th><th>单位</th><th>含税单价</th><th>不含税单价</th></tr></thead>
          <tbody>
            <tr class="h19"><th class="n">4</th><td class="n">A14-152</td><td>陶瓷锦砖&ensp;干粉型粘结剂粘贴&ensp;墙面</td><td class="n">100m2</td><td class="num">8456.5</td><td class="num">8036.37</td></tr>
            <tr class="h19"><th class="n">5</th><td class="n">A14-153</td><td>陶瓷锦砖&ensp;干粉型粘结剂粘贴&ensp;方柱<span class="n">(</span>梁<span class="n">)</span>面</td><td class="n">100m2</td><td class="num">9040.61</td><td class="num">8620.44</td></tr>
            <tr class="h19"><th class="n">6</th><td class="n">A14-154</td><td>陶瓷锦砖&ensp;干粉型粘结剂粘贴&ensp;零星项目</td><td class="n">100m2</td><td class="num">9936.42</td><td class="num">9483.51</td></tr>
            <tr class="h19"><th class="n">7</th><td class="n">A14-155</td><td>镶贴纸皮条形瓷砖&ensp;水泥膏&ensp;墙面墙裙</td><td class="n">100m2</td><td class="num">7261.46</td><td class="num">6853.11</td></tr>
            <tr class="h19"><th class="n">8</th><td class="n">A14-156</td><td>镶贴纸皮条形瓷砖&ensp;水泥膏&ensp;独立梁柱面</td><td class="n">100m2</td><td class="num">7792.95</td><td class="num">7374.2</td></tr>
            <tr class="h19"><th class="n">9</th><td class="n">A14-157</td><td>镶贴纸皮条形瓷砖&ensp;水泥膏&ensp;零星项目</td><td class="n">100m2</td><td class="num">7934.51</td><td class="num">7509.96</td></tr>
            <tr class="h19"><th class="n">10</th><td class="n">A14-158</td><td>镶贴纸皮条形瓷砖&ensp;干粉型粘结剂&ensp;墙面墙裙</td><td class="n">100m2</td><td class="num">9736.14</td><td class="num">9077.3</td></tr>
            <tr class="h19"><th class="n">11</th><td class="n">A14-159</td><td>镶贴纸皮条形瓷砖&ensp;干粉型粘结剂&ensp;独立梁柱面</td><td class="n">100m2</td><td class="num">10342.48</td><td class="num">9673.27</td></tr>
            <tr class="h19"><th class="n">12</th><td class="n">A14-160</td><td>镶贴纸皮条形瓷砖&ensp;干粉型粘结剂&ensp;零星项目</td><td class="n">100m2</td><td class="num">10914.1</td><td class="num">10211.8</td></tr>
            <tr class="h29"><th class="n">13</th><td class="n">A14-161</td><td class="two">周长<b>400mm</b>以内&ensp;水泥砂浆粘贴&ensp;面砖灰缝<b>(mm</b>以内<b>)</b><br><b class="in">5</b></td><td class="n">100m2</td><td class="num">9397.95</td><td class="num">8975.54</td></tr>
            <tr class="h29"><th class="n">14</th><td class="n">A14-162</td><td class="two">周长<b>400mm</b>以内&ensp;水泥砂浆粘贴&ensp;面砖灰缝<b>(mm</b>以内<b>)</b><br><b class="in">10</b></td><td class="n">100m2</td><td class="num">9442.63</td><td class="num">8753.6</td></tr>
            <tr class="h29"><th class="n">15</th><td class="n">A14-163</td><td class="two">周长<b>400mm</b>以内&ensp;水泥砂浆粘贴&ensp;面砖灰缝<b>(mm</b>以内<b>)</b><br><b class="in">20</b></td><td class="n">100m2</td><td class="num">8945.04</td><td class="num">8321.23</td></tr>
            <tr class="h29"><th class="n">16</th><td class="n">A14-164</td><td class="two">周长<b>500mm</b>以内&ensp;水泥砂浆粘贴&ensp;面砖灰缝<b>(mm</b>以内<b>)</b><br><b class="in">5</b></td><td class="n">100m2</td><td class="num">7863.3</td><td class="num">7389.26</td></tr>
            <tr class="h29"><th class="n">17</th><td class="n">A14-165</td><td class="two">周长<b>500mm</b>以内&ensp;水泥砂浆粘贴&ensp;面砖灰缝<b>(mm</b>以内<b>)</b><br><b class="in">10</b></td><td class="n">100m2</td><td class="num">7722.92</td><td class="num">7266.88</td></tr>
            <tr class="h29"><th class="n">18</th><td class="n">A14-166</td><td class="two">周长<b>500mm</b>以内&ensp;水泥砂浆粘贴&ensp;面砖灰缝<b>(mm</b>以内<b>)</b><br><b class="in">20</b></td><td class="n">100m2</td><td class="num">7460.12</td><td class="num">7037.53</td></tr>
            <tr class="h29"><th class="n">19</th><td class="n">A14-167</td><td class="two">周长<b>600mm</b>以内&ensp;水泥砂浆粘贴&ensp;面砖灰缝<b>(mm</b>以内<b>)</b><br><b class="in">5</b></td><td class="n">100m2</td><td class="num">6902.87</td><td class="num">6451.29</td></tr>
            <tr class="h29"><th class="n">20</th><td class="n">A14-168</td><td class="two">周长<b>600mm</b>以内&ensp;水泥砂浆粘贴&ensp;面砖灰缝<b>(mm</b>以内<b>)</b><br><b class="in">10</b></td><td class="n">100m2</td><td class="num">6810.35</td><td class="num">6370.47</td></tr>
            <tr class="h29"><th class="n">21</th><td class="n">A14-169</td><td class="two">周长<b>600mm</b>以内&ensp;水泥砂浆粘贴&ensp;面砖灰缝<b>(mm</b>以内<b>)</b><br><b class="in">20</b></td><td class="n">100m2</td><td class="num">6518.64</td><td class="num">6115.72</td></tr>
          </tbody>
        </table>
      </div>
      <div class="vs"><svg class="a u"><use href="#cv"/></svg><i class="thumb pos"></i><svg class="a end"><use href="#cv"/></svg></div>
    </div>
  </div>
  <svg class="mark m1" viewBox="0 0 452 54"><ellipse cx="226" cy="27" rx="224" ry="25"/></svg>
  <svg class="mark m2" viewBox="0 0 106 28"><ellipse cx="53" cy="14" rx="51" ry="12.500"/></svg>
</section>

<div class="ball">
  <svg class="orb" viewBox="0 0 50 50"><circle cx="25" cy="25" r="24" fill="#e6e6e6" stroke="#9a9a9a"/><circle cx="25" cy="25" r="21.500" fill="url(#gball)" stroke="#0d6a44"/><ellipse cx="25" cy="8" rx="8" ry="2.500" fill="#fff" opacity=".55"/></svg>
  <b>68%</b>
  <span class="ar"><svg viewBox="0 0 8 10"><path d="M4 0 8 4H5v5H3V4H0z" fill="#e8563a"/></svg><svg viewBox="0 0 8 10"><path d="M4 10 8 6H5V1H3v5H0z" fill="#2f9e55"/></svg></span>
  <span class="sp">0K/s<br>0K/s</span>
  <svg class="plus" viewBox="0 0 18 18"><circle cx="9" cy="9" r="8.500" fill="#3c82dc"/><path d="M9 5v8M5 9h8" stroke="#fff" stroke-width="2"/></svg>
</div>

<div class="ime">
  <svg class="s"><use href="#sogou"/></svg>
  <b>中</b>
  <svg viewBox="0 0 16 16"><circle cx="5" cy="5" r="2" fill="none" stroke="#1d74c8" stroke-width="1.500"/><path d="M11 9h3c0 3-1 4-3 5z" fill="#1d74c8"/></svg>
  <svg viewBox="0 0 16 16"><rect x="5" width="6" height="10" rx="3" fill="#1d74c8"/><path d="M2.500 6c0 8 11 8 11 0M8 12v3M5 15h6" fill="none" stroke="#1d74c8" stroke-width="1.500"/></svg>
  <svg viewBox="0 0 16 16"><rect y="2" width="16" height="12" rx="1" fill="#1d74c8"/><path d="M2 5h12M2 8h12" stroke="#fff" stroke-width="1.500" stroke-dasharray="2 1"/><path d="M4 11.500h8" stroke="#fff" stroke-width="1.500"/></svg>
  <svg viewBox="0 0 16 16"><circle cx="7" cy="4" r="3.500" fill="#aac0d8"/><path d="M0 14c0-7 14-7 14 0z" fill="#aac0d8"/><path d="M9 9v5M11 9.500h4l-2 5" stroke="#8098b4" stroke-width="1.500" fill="none"/></svg>
  <svg viewBox="0 0 16 16"><path d="M5 1c1 2 5 2 6 0l5 3-2 4-2-1v8H4V7L2 8 0 4z" fill="#1d74c8"/></svg>
  <svg viewBox="0 0 16 16"><path d="M15 4.500 12.500 6 10 4l1-3C8 0 6 3 7 6L0 13l3 3 7-7c3 1 6-1 5-4.500z" fill="#1d74c8"/></svg>
</div>
</body>
</html>
```
FILE: styles.css
```css
* { box-sizing: border-box; }
body {
  margin: 0;
  height: 100vh;
  display: flex;
  flex-direction: column;
  overflow: hidden;
  position: relative;
  background: #f0f0f0;
  color: #000;
  font: 12px/16px "Open Sans", "Noto Sans CJK SC", sans-serif;
  white-space: nowrap;
}
button { border: 0; background: none; padding: 0; margin: 0; font: inherit; color: inherit; }
ul { list-style: none; margin: 0; padding: 0; }
svg { display: block; flex: none; }
.defs { position: absolute; width: 0; height: 0; }
.i { width: 16px; height: 16px; }
.l { transform: rotate(-90deg); }
.r { transform: rotate(90deg); }
.d { transform: rotate(180deg); }
.n, .num { font: 10px/14px "DejaVu Sans Mono", monospace; }

/* window header */
.titlebar { display: flex; align-items: center; height: 23px; background: #fff; padding-left: 2px; color: #999; }
.ttl { flex: 1; min-width: 0; margin-left: 5px; overflow: hidden; font-family: Inter, "Noto Sans CJK SC", sans-serif; }
.winctl { display: flex; align-self: stretch; }
.winctl button { width: 45px; display: flex; align-items: center; justify-content: center; }
.winctl svg { width: 12px; height: 12px; fill: none; stroke: #808080; }
.menubar { display: flex; align-items: center; height: 27px; padding-left: 3px; gap: 11px; }
.menubar > svg { margin-right: -5px; }
.menubar > button { display: flex; align-items: center; gap: 3px; }
.menubar .near { margin-left: -4px; }
.mdi { margin-left: auto; display: flex; gap: 9px; padding-right: 5px; }
.mdi svg { width: 10px; height: 10px; fill: none; stroke: #000; }

/* toolbars */
.bar { display: flex; height: 27px; align-items: stretch; gap: 4px; padding-left: 2px; }
.grp { display: flex; align-items: center; background: linear-gradient(#fdfdfd, #f0f0f0); padding-right: 2px; border-radius: 2px; }
.grip { width: 2px; height: 14px; margin: 0 2px 0 1px; background: repeating-linear-gradient(#aaa 0 2px, transparent 2px 4px); }
.ib { width: 23px; display: flex; justify-content: center; }
.gray { fill: #bbb; }
.blue { fill: #2d6fd6; }
.tb { display: flex; align-items: center; gap: 3px; height: 23px; padding: 0 4px; }
.tb.on { background: #dcebf8; border: 1px solid #0078d7; }
.bar2 .tb.on { padding: 0 2px; }
.off { color: #777; }
.sep { width: 1px; height: 14px; margin: 0 2px; background: #b4b4b4; }
.bar2 .ib + .sep { margin: 0 6px 0 4px; }
.car { width: 12px; display: flex; justify-content: center; }
.car::before { content: ""; border: 3px solid transparent; border-top: 3px solid #000; border-bottom: 0; }
.car.off::before { border-top-color: #888; }
.bar2 .car { width: 14px; }
.bar2 .mid { width: 18px; padding-right: 4px; }
.bar2 .wide { width: 22px; }
.chk { display: flex; align-items: center; gap: 8px; }
.chk input { margin: 0 0 0 2px; }
input[type="checkbox"] { appearance: none; width: 11px; height: 11px; border: 1px solid #777; background: #fff; }
.bar2 .grp { padding-right: 6px; }
.bar2 .grip { margin-right: 7px; }

/* main area */
main { flex: 1; min-height: 0; display: flex; }
.vtabs { width: 25px; padding-top: 12px; overflow: hidden; position: relative; z-index: 0; display: flex; flex-direction: column; background: #f4f4f4; border-right: 2px solid #808080; }
.vtabs > button { position: relative; flex: none; width: 24px; padding: 13px 0; writing-mode: vertical-rl; text-orientation: upright; font-size: 13px; line-height: 24px; text-align: start; }
.vtabs > button svg { position: absolute; inset: 0; width: 24px; height: 100%; overflow: visible; z-index: -1; fill: #fff; stroke: #666; }
.vtabs .cur { font-weight: bold; }
.vtabs > .cur svg { fill: #f0f0f0; }
.spin { position: absolute; left: 0; bottom: 2px; display: flex; background: #d4d0c8; }
.spin button { width: 12px; height: 12px; border: 1px solid #555; background: #ccc; }
.spin svg { width: 10px; height: 10px; }
.spin button:disabled { fill: #888; }

.side { width: 155px; padding-left: 4px; display: flex; flex-direction: column; }
.sidehead { height: 27px; display: flex; align-items: center; justify-content: space-between; padding: 0 9px 0 39px; }
.sidehead svg { width: 12px; height: 12px; stroke: #000; stroke-width: 2; }
.sidebox { flex: 1; min-height: 0; border: 1px solid #828790; border-bottom-width: 2px; background: #fff; display: flex; flex-direction: column; overflow: hidden; padding: 2px 1px 1px; }
.ptree { flex: 1; padding-left: 5px; line-height: 14px; overflow: hidden; }
.ptree ul { margin-left: 7px; background: linear-gradient(#777 50%, transparent 50%) 0 0 / 1px 2px repeat-y; }
.ptree li { padding-left: 12px; background: linear-gradient(90deg, #777 50%, transparent 50%) 0 7px / 2px 1px repeat-x; position: relative; isolation: isolate; }
.ptree li::before { content: ""; position: absolute; inset: 0 0 0 9px; background: #fff; z-index: -1; }
.ptree li.sel::before { background: #d9d9d9; }
.sidetabs { height: 21px; display: flex; padding-left: 8px; }
.sidetabs button { position: relative; height: 17px; width: 48px; line-height: 15px; }
.sidetabs svg { position: absolute; inset: 0; width: 48px; height: 17px; fill: #fff; stroke: #777; }
.sidetabs span { position: relative; }
.sidetabs .cur svg { fill: #f0f0f0; }
.split { width: 7px; display: flex; justify-content: center; align-items: center; }
.split i { width: 6px; height: 100px; border: 1px solid #777; background: #f4f4f4; }

/* scroll bars */
.vs { width: 15px; background: #f0f0f0; display: flex; flex-direction: column; align-items: center; }
.hs { height: 16px; background: #f0f0f0; display: flex; align-items: center; }
.a { width: 10px; height: 10px; color: #505050; margin: 4px 0; }
.a.u { transform: rotate(180deg); }
.a.end { margin-top: auto; }
.hs .a { margin: 0 4px; transform: rotate(90deg); }
.hs .a.r { margin-left: auto; transform: rotate(-90deg); }
.thumb { background: #cdcdcd; display: block; }
.vs .thumb { width: 15px; height: 17px; }
.hs .thumb { height: 15px; width: 84px; }
.hs .thumb.short { width: 17px; }
.vs .thumb.tall { height: 178px; margin-top: 7px; }
.vs .thumb.pos { margin-top: 40px; }
.dlg .hs .thumb { width: 116px; }

/* grids */
.work { flex: 1; min-width: 0; display: flex; flex-direction: column; }
.frame { border: 1px solid #a0a0a8; background: #fff; padding: 1px; display: grid; grid-template-columns: minmax(0, 1fr) auto; grid-template-rows: minmax(0, 1fr) auto; min-height: 0; overflow: hidden; }
.frame > .hs { grid-column: 1 / 3; }
.clip { overflow: hidden; min-height: 0; }
.top { flex: 403 0 0; padding: 1px 2px 2px 1px; background: #f0f0f0; }
.g { border-collapse: separate; border-spacing: 0; table-layout: fixed; background: #fff; }
.main { width: 100%; border-right: 3px solid #f0f0f0; }
.g th, .g td { border: solid #c0c0c0; border-width: 0 1px 1px 0; padding: 0 3px 0 2px; height: 19px; line-height: 14px; overflow: hidden; font-weight: normal; text-align: left; }
.g th { background: #f0f0f0; text-align: center; padding: 0; }
.g thead th { height: 21px; }
.g .hot { background: linear-gradient(#fad9a2, #f3c265); }
.g .num, .g .rt { text-align: right; }
.g .c { text-align: center; }
.g .h20 td { height: 20px; }
.g .h29 td { height: 29px; }
.g .h53 td { height: 53px; }
.g .part td { background: #e1f3ff; }
.g .part th { background: #ffd083; }
.item td { background-color: #a8dbf9; }
.g .feat { vertical-align: top; text-align: center; }
.g .part td.k1 { background: #bfdff8; padding-left: 3px; }
.g td.k2 { padding-left: 13px; background-image: linear-gradient(#c0c0c0, #c0c0c0); background-size: 1px 100%; background-position: 8px 0; background-repeat: no-repeat; }
.mb { display: inline-block; vertical-align: middle; width: 13px; height: 13px; margin-right: 4px; border: 1px solid #b8b8b8; background: linear-gradient(#000, #000) 50% 50% / 7px 1px no-repeat #fff; }
.g td.k3, .g td.k4 { background: linear-gradient(#c0c0c0, #c0c0c0) 8px 0 / 1px 100% no-repeat, linear-gradient(#c0c0c0, #c0c0c0) 18px 0 / 1px 100% no-repeat, linear-gradient(#c0c0c0, #c0c0c0) 18px 50% / 17px 1px no-repeat; }
.g td.k4 { background-size: 1px 100%, 1px 50%, 17px 1px; }
.midtabs { height: 29px; padding: 8px 0 0 2px; }
.midtabs button { height: 19px; padding: 0 5px; border: 1px solid #888; border-width: 2px 1px 0 2px; background: #f8f8f8; line-height: 17px; }
.bottom { flex: 170 0 0; min-height: 0; display: flex; }
.low { width: 1051px; flex: 0 1 auto; padding-right: 2px; }
.yel { width: 929px; }
.yel td { background: #ffffc0; }
.yel .cur th { background: #ffd083; }
.yel .cur .id { background: #d8ebc4; }
.g td.id { padding-left: 20px; }
.yel input { display: block; width: 13px; height: 13px; margin: 0 auto; border-color: #333; }
.acts { flex: 1; padding: 5px 7px 0 8px; overflow: hidden; }
.btns { display: grid; grid-template-columns: 48px 48px; gap: 6px; padding-left: 4px; }
.btns button, .dact button { height: 23px; background: #ccc; border: 1px solid #bfbfbf; color: #838383; }
.btns .w { grid-column: 1 / 3; }
.acts fieldset { margin: 3px 0 0; border: 1px solid #dcdcdc; height: 90px; padding: 8px 0 0; display: flex; justify-content: space-between; align-items: flex-start; }
.acts legend { margin-left: 4px; padding: 0 1px; }
label { display: flex; align-items: center; }
input[type="radio"] { appearance: none; width: 13px; height: 13px; margin: 0; border: 1px solid #555; border-radius: 50%; background: #fff; }
.acts label { gap: 3px; }
.acts label:last-child { padding-right: 5px; }

/* status and task bars */
.status { height: 22px; display: grid; grid-template-columns: 373fr 374fr 226fr 202fr 190fr; gap: 2px; padding: 2px 0 1px; border-top: 1px solid #fff; }
.status span { border: 1px solid #d4d4d4; background: linear-gradient(#fff, #f0f0f0); padding-left: 1px; line-height: 17px; overflow: hidden; }
.status b, .two b { font: 10px/12px "DejaVu Sans Mono", monospace; }
.taskbar { height: 40px; display: flex; background: #020d11; color: #fff; }
.start { width: 48px; background: #000; display: flex; align-items: center; justify-content: center; }
.start svg { width: 16px; height: 16px; }
.search { width: 345px; background: #333; display: flex; align-items: center; padding: 0 15px 0 8px; gap: 5px; }
.ring { width: 22px; height: 22px; }
.search input { flex: 1; min-width: 0; border: 0; background: none; font: 14px/18px "Open Sans", "Noto Sans CJK SC", sans-serif; color: #fff; padding: 0; }
.search input::placeholder { color: #9b9b9b; opacity: 1; }
.mic { width: 12px; height: 18px; fill: none; stroke: #aaa; }
.apps { display: flex; gap: 1px; padding-left: 1px; }
.apps button { width: 48px; display: flex; align-items: center; justify-content: center; border-bottom: 2px solid transparent; }
.apps svg { width: 24px; height: 24px; }
.apps .run { border-bottom-color: #76b9ed; }
.apps .hot { background: #333e42; }
.bars { width: 4px; height: 14px; margin: 13px 11px 0 8px; border: solid #444; border-width: 0 1px; }
.tray { margin-left: auto; display: flex; align-items: center; gap: 8px; line-height: 18px; text-align: center; padding-right: 8px; }
.cpu { margin-right: 9px; }
.ti { width: 16px; height: 16px; fill: none; stroke: #fff; }
.zh { font-size: 14px; }
.sg { width: 16px; height: 16px; margin: 0 8px 0 6px; }
.note { width: 48px; position: relative; display: flex; justify-content: center; }
.note svg { width: 26px; height: 24px; }
.note b { position: absolute; left: 23px; top: 7px; width: 10px; font-size: 11px; }

/* query dialog */
.dlg { position: absolute; left: 262px; top: 150px; width: 853px; height: 514px; border: 1px solid #3392e8; background: #f0f0f0; display: flex; flex-direction: column; box-shadow: 0 4px 16px rgba(0, 0, 0, .35); }
.dhead { height: 30px; flex: none; background: #fff; display: flex; align-items: center; padding-left: 8px; gap: 5px; }
.dhead .winctl { margin-left: auto; }
.dhead .winctl svg { stroke: #000; }
.dhead .winctl .dim svg { stroke: #ccc; }
.dhead .hov { background: #e5e5e5; }
.dtabs { height: 27px; flex: none; display: flex; align-items: flex-start; padding-left: 1px; }
.dtabs > button { height: 21px; margin-top: 1px; padding: 0 11px; border-right: 1px solid #a8a8a8; line-height: 18px; }
.dtabs > button:first-child { padding-left: 6px; }
.dtabs > .cur { padding: 0 5px 0 8px; }
.dtabs .cur span { display: block; width: 42px; height: 20px; line-height: 17px; border: 1px solid #d0d0d0; border-width: 2px 1px 1px 2px; border-top-color: #777; border-left-color: #777; background: #f9f9f9; }
.dact { margin-left: auto; display: flex; gap: 4px; padding-top: 3px; }
.dact button { width: 73px; }
.dact button:last-child { width: 70px; }
.dbody { flex: 1; min-height: 0; display: flex; gap: 3px; }
.dleft { width: 216px; display: flex; flex-direction: column; padding-left: 1px; }
.combo { position: relative; height: 20px; flex: none; }
.combo select { appearance: none; width: 100%; height: 20px; border: 1px solid #adadad; border-radius: 0; background: #e1e1e1; font: inherit; line-height: 16px; padding: 0 0 0 2px; color: #000; }
.combo svg { position: absolute; right: 4px; top: 5px; width: 10px; height: 10px; fill: none; stroke: #555; }
.qtabs { display: flex; align-items: flex-end; height: 23px; flex: none; }
.qtabs button { height: 18px; padding: 0 3px; border: 1px solid #dcdcdc; border-bottom: 0; }
.qtabs .cur { height: 21px; width: 63px; background: #fff; padding: 0 6px; }
.qpage { flex: 1; min-height: 0; border: 1px solid #dcdcdc; border-top-color: #fff; padding: 2px 3px 0 2px; margin-bottom: 2px; display: flex; flex-direction: column; background: #f0f0f0; }
.tbox { flex: 1; min-height: 0; border: 1px solid #828790; background: #fff; padding: 1px; display: grid; grid-template-columns: minmax(0, 1fr) 16px; grid-template-rows: minmax(0, 1fr) 16px; }
.tbox .hs { grid-column: 1 / 3; padding-right: 16px; }
.tclip { overflow: hidden; padding-left: 2px; }
.tree, .tree ul { background: linear-gradient(#888 50%, transparent 50%) 9px 0 / 1px 3px repeat-y; }
.tree ul { margin-left: 19px; }
.tree .r { transform: none; height: 16px; display: flex; align-items: center; }
.tree .r svg { width: 10px; height: 16px; padding: 3px 0; margin: 0 7px 0 4px; color: #404040; background: #fff; }
.tree .s svg { height: 10px; padding: 0; transform: rotate(-90deg); color: #a0a0a0; }
.tree .f::before { content: ""; flex: none; width: 9px; height: 1px; margin: 0 2px 0 10px; background: repeating-linear-gradient(90deg, #888 0 1px, transparent 1px 2px); }
.tree b { flex: none; width: 12px; font-weight: normal; }
.tree .sel { background: #d9d9d9; }
.tree .f span { flex: none; padding: 0 4px; margin-left: -4px; }
.radios { height: 40px; flex: none; display: flex; align-items: center; gap: 21px; padding-left: 10px; }
.radios label { gap: 9px; }
.radios input { width: 11px; height: 11px; border-color: #999; }
.radios input:checked { background: radial-gradient(#000 0 3px, #fff 3px); }
.dgrid { flex: 1; min-width: 0; margin-bottom: 1px; grid-template-rows: minmax(0, 1fr); }
.white { width: 554px; }
.g .two { line-height: 12px; vertical-align: middle; }
.two .in { margin-left: 6px; }
.mark { position: absolute; fill: none; stroke: #f00; stroke-width: 3; pointer-events: none; }
.m1 { left: 210px; top: 234px; width: 452px; height: 54px; }
.m2 { left: 67px; top: 338px; width: 106px; height: 28px; }

/* floating widgets */
.ball { position: absolute; left: 734px; top: 3px; width: 127px; height: 50px; display: flex; align-items: center; }
.ball::before { content: ""; position: absolute; left: 24px; right: 0; top: 7px; height: 38px; border-radius: 0 19px 19px 0; background: linear-gradient(#f2f2f2, #d6d6d6); border: 1px solid #b8b8b8; box-shadow: 0 1px 3px rgba(0, 0, 0, .4); }
.ball > * { position: relative; }
.orb { width: 50px; height: 50px; }
.ball > b { position: absolute; left: 0; width: 50px; text-align: center; color: #fff; font-size: 14px; font-weight: normal; }
.ar { display: flex; flex-direction: column; gap: 5px; margin-left: 2px; }
.ar svg { width: 8px; height: 10px; }
.sp { flex: 1; text-align: right; font-size: 10px; line-height: 15px; padding-right: 4px; }
.plus { width: 17px; height: 17px; margin-right: 6px; }
.ime { position: absolute; right: 0; bottom: 41px; width: 174px; height: 23px; background: #f8fcff; border: 1px solid #8ab4dc; display: flex; align-items: center; justify-content: space-between; padding: 0 4px 0 22px; }
.ime svg { width: 16px; height: 16px; }
.ime .s { position: absolute; left: -12px; top: -4px; width: 28px; height: 27px; }
.ime b { color: #1d74c8; font-size: 14px; }
```
